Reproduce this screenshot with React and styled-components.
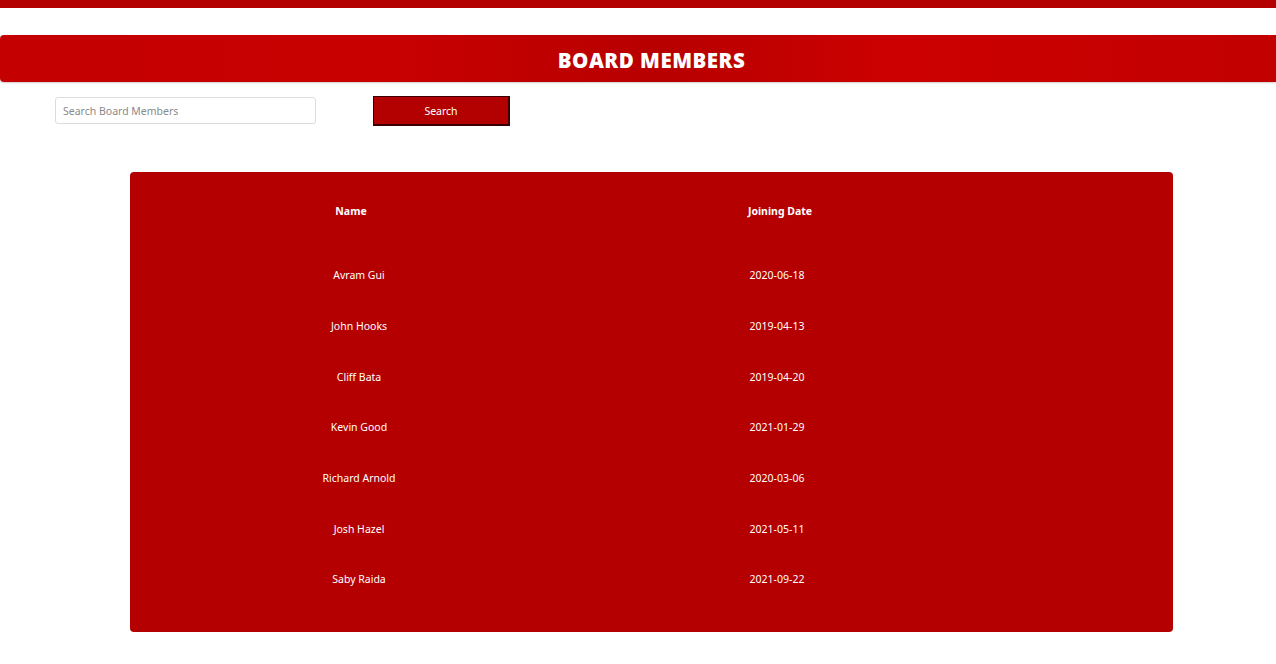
import styled, { createGlobalStyle } from 'styled-components';

const members = [
  { name: 'Avram Gui', date: '2020-06-18' },
  { name: 'John Hooks', date: '2019-04-13' },
  { name: 'Cliff Bata', date: '2019-04-20' },
  { name: 'Kevin Good', date: '2021-01-29' },
  { name: 'Richard Arnold', date: '2020-03-06' },
  { name: 'Josh Hazel', date: '2021-05-11' },
  { name: 'Saby Raida', date: '2021-09-22' },
];

export default function App() {
  return (
    <Page>
      <GlobalStyle />
      <TopBar />
      <Banner>
        <BannerTitle>BOARD MEMBERS</BannerTitle>
      </Banner>
      <SearchRow>
        <SearchInput placeholder="Search Board Members" />
        <SearchButton>Search</SearchButton>
      </SearchRow>
      <TableCard>
        <Row $head>
          <HeadCell $shift={-8}>Name</HeadCell>
          <HeadCell $shift={3}>Joining Date</HeadCell>
        </Row>
        {members.map((m) => (
          <Row key={m.name}>
            <Cell>{m.name}</Cell>
            <Cell>{m.date}</Cell>
          </Row>
        ))}
      </TableCard>
    </Page>
  );
}

const GlobalStyle = createGlobalStyle`
  body {
    margin: 0;
    background: #fff;
    font-family: 'Noto Sans', 'Open Sans', sans-serif;
  }
`;

const Page = styled.div`
  display: flex;
  flex-direction: column;
  width: 1276px;
  height: 664px;
  overflow: hidden;
`;

const TopBar = styled.div`
  height: 8px;
  background: #b30000;
`;

const Banner = styled.div`
  margin-top: 27px;
  height: 47px;
  display: flex;
  align-items: center;
  justify-content: center;
  padding-left: 27px;
  border-radius: 4px 0 0 4px;
  background: linear-gradient(90deg, #c40000 0%, #c80000 30%, #b80000 52%, #cc0000 70%, #c20000 100%);
  box-shadow: 0 1px 2px rgba(0, 0, 0, 0.2);
`;

const BannerTitle = styled.h1`
  margin: 2px 0 0;
  color: #fff;
  font-family: 'Open Sans', sans-serif;
  font-weight: 800;
  font-size: 20.5px;
  letter-spacing: 0.5px;
`;

const SearchRow = styled.div`
  display: flex;
  align-items: flex-start;
  gap: 57px;
  padding: 14px 0 0 55px;
`;

const SearchInput = styled.input`
  box-sizing: border-box;
  margin-top: 1px;
  width: 261px;
  height: 27px;
  border: 1px solid #dcdcdc;
  border-radius: 3px;
  padding: 0 7px;
  font-family: 'Noto Sans', sans-serif;
  font-size: 10.5px;
  outline: none;
  &::placeholder {
    color: #8a8a8a;
  }
`;

const SearchButton = styled.button`
  box-sizing: border-box;
  width: 137px;
  height: 30px;
  background: #b30000;
  border: 1px solid #3a0000;
  border-right-width: 2px;
  border-bottom-width: 2px;
  color: #fff;
  font-family: 'Noto Sans', sans-serif;
  font-size: 10.5px;
`;

const TableCard = styled.div`
  margin: 46px 0 0 130px;
  width: 1043px;
  height: 460px;
  box-sizing: border-box;
  background: #b40000;
  border-radius: 4px;
  padding-top: 25px;
`;

const Row = styled.div`
  display: grid;
  grid-template-columns: 458px 378px 1fr;
  align-items: center;
  height: ${(p) => (p.$head ? '27px' : '50.7px')};
  margin-bottom: ${(p) => (p.$head ? '26px' : '0')};
`;

const Cell = styled.div`
  text-align: center;
  color: #fff;
  font-size: 10.5px;
`;

const HeadCell = styled(Cell)`
  font-weight: 700;
  transform: translateX(${(p) => p.$shift}px);
`;
